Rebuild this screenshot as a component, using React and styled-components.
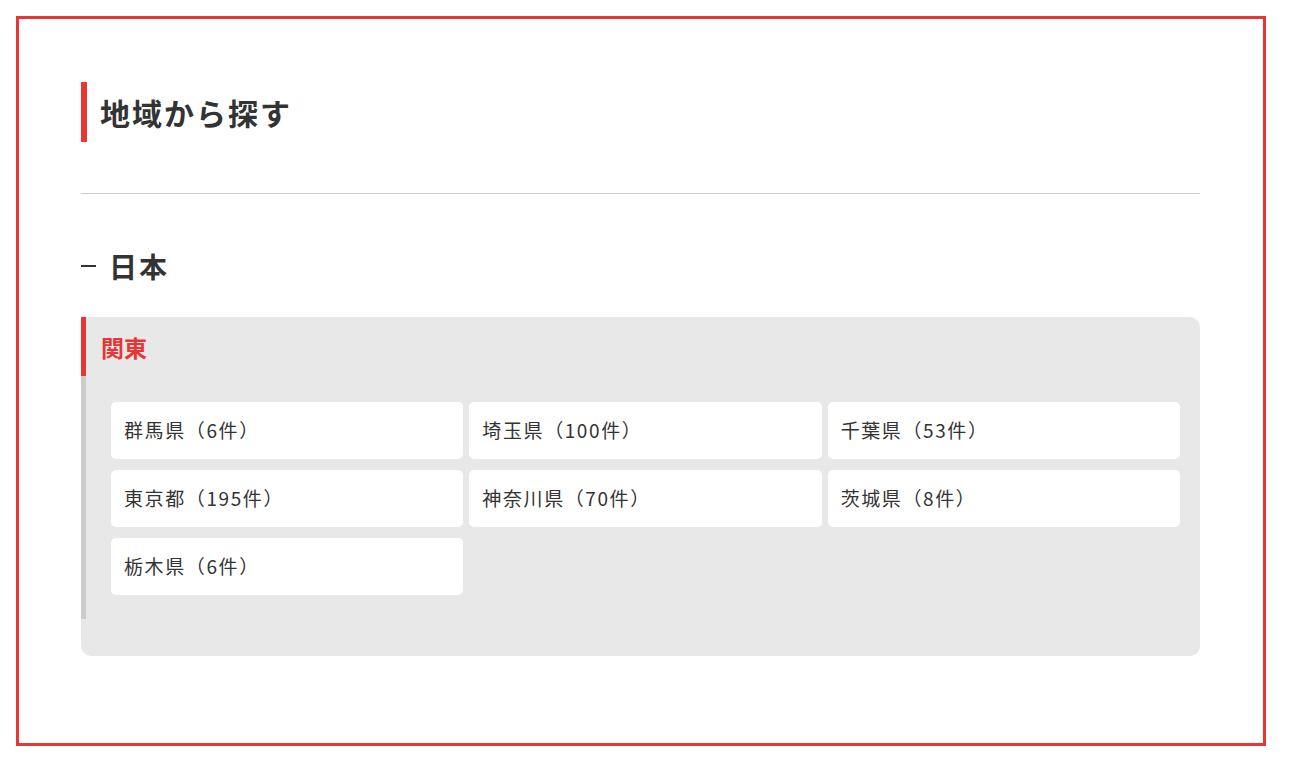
import styled, { createGlobalStyle } from 'styled-components';

const GlobalStyle = createGlobalStyle`
    * { box-sizing: border-box; }
    body {
        margin: 0;
        background: #fff;
        font-family: "Noto Sans CJK JP", "Noto Sans", sans-serif;
        color: #333;
    }
`;

const Page = styled.div`
    padding: 16px;
`;
const Frame = styled.section`
    width: 1250px;
    height: 730px;
    border: 3px solid #ea3535;
    padding: 63px 63px 0 62px;
`;
const Title = styled.h2`
    margin: 0;
    height: 60px;
    display: flex;
    align-items: center;
    padding-left: 13px;
    border-left: 6px solid #ea3535;
    font-size: 30px;
    font-weight: 700;
    letter-spacing: 2px;
    color: #333;
`;
const Divider = styled.hr`
    margin: 51px 0 0;
    border: 0;
    border-top: 1px solid #ccc;
`;
const Country = styled.h3`
    margin: 52px 0 0;
    height: 40px;
    display: flex;
    align-items: center;
    gap: 13px;
    font-size: 28px;
    font-weight: 700;
    letter-spacing: 2px;
    color: #333;
    &::before {
        content: '';
        width: 15px;
        height: 2px;
        background: #333;
    }
`;
const RegionBox = styled.div`
    margin-top: 31px;
    background: #e8e8e8;
    border-radius: 0 10px 10px 10px;
    padding-bottom: 37px;
`;
const RegionName = styled.h4`
    margin: 0;
    height: 59px;
    display: flex;
    align-items: center;
    padding-left: 15px;
    border-left: 5px solid #ea3535;
    font-size: 23px;
    font-weight: 700;
    color: #ea3535;
`;
const Grid = styled.ul`
    margin: 0;
    list-style: none;
    border-left: 5px solid #ccc;
    padding: 26px 20px 24px 25px;
    display: grid;
    grid-template-columns: repeat(3, 1fr);
    column-gap: 6px;
    row-gap: 11px;
`;
const Pref = styled.li`
    height: 57px;
    display: flex;
    align-items: center;
    padding-left: 13px;
    padding-bottom: 2px;
    background: #fff;
    border-radius: 5px;
    font-size: 19px;
    letter-spacing: 1.6px;
    color: #333;
`;

const prefs = [
    '群馬県（6件）',
    '埼玉県（100件）',
    '千葉県（53件）',
    '東京都（195件）',
    '神奈川県（70件）',
    '茨城県（8件）',
    '栃木県（6件）',
];

const App = () => {
    return (
        <Page>
            <GlobalStyle />
            <Frame>
                <Title>地域から探す</Title>
                <Divider />
                <Country>日本</Country>
                <RegionBox>
                    <RegionName>関東</RegionName>
                    <Grid>
                        {prefs.map((p) => (
                            <Pref key={p}>{p}</Pref>
                        ))}
                    </Grid>
                </RegionBox>
            </Frame>
        </Page>
    );
};

export default App;
